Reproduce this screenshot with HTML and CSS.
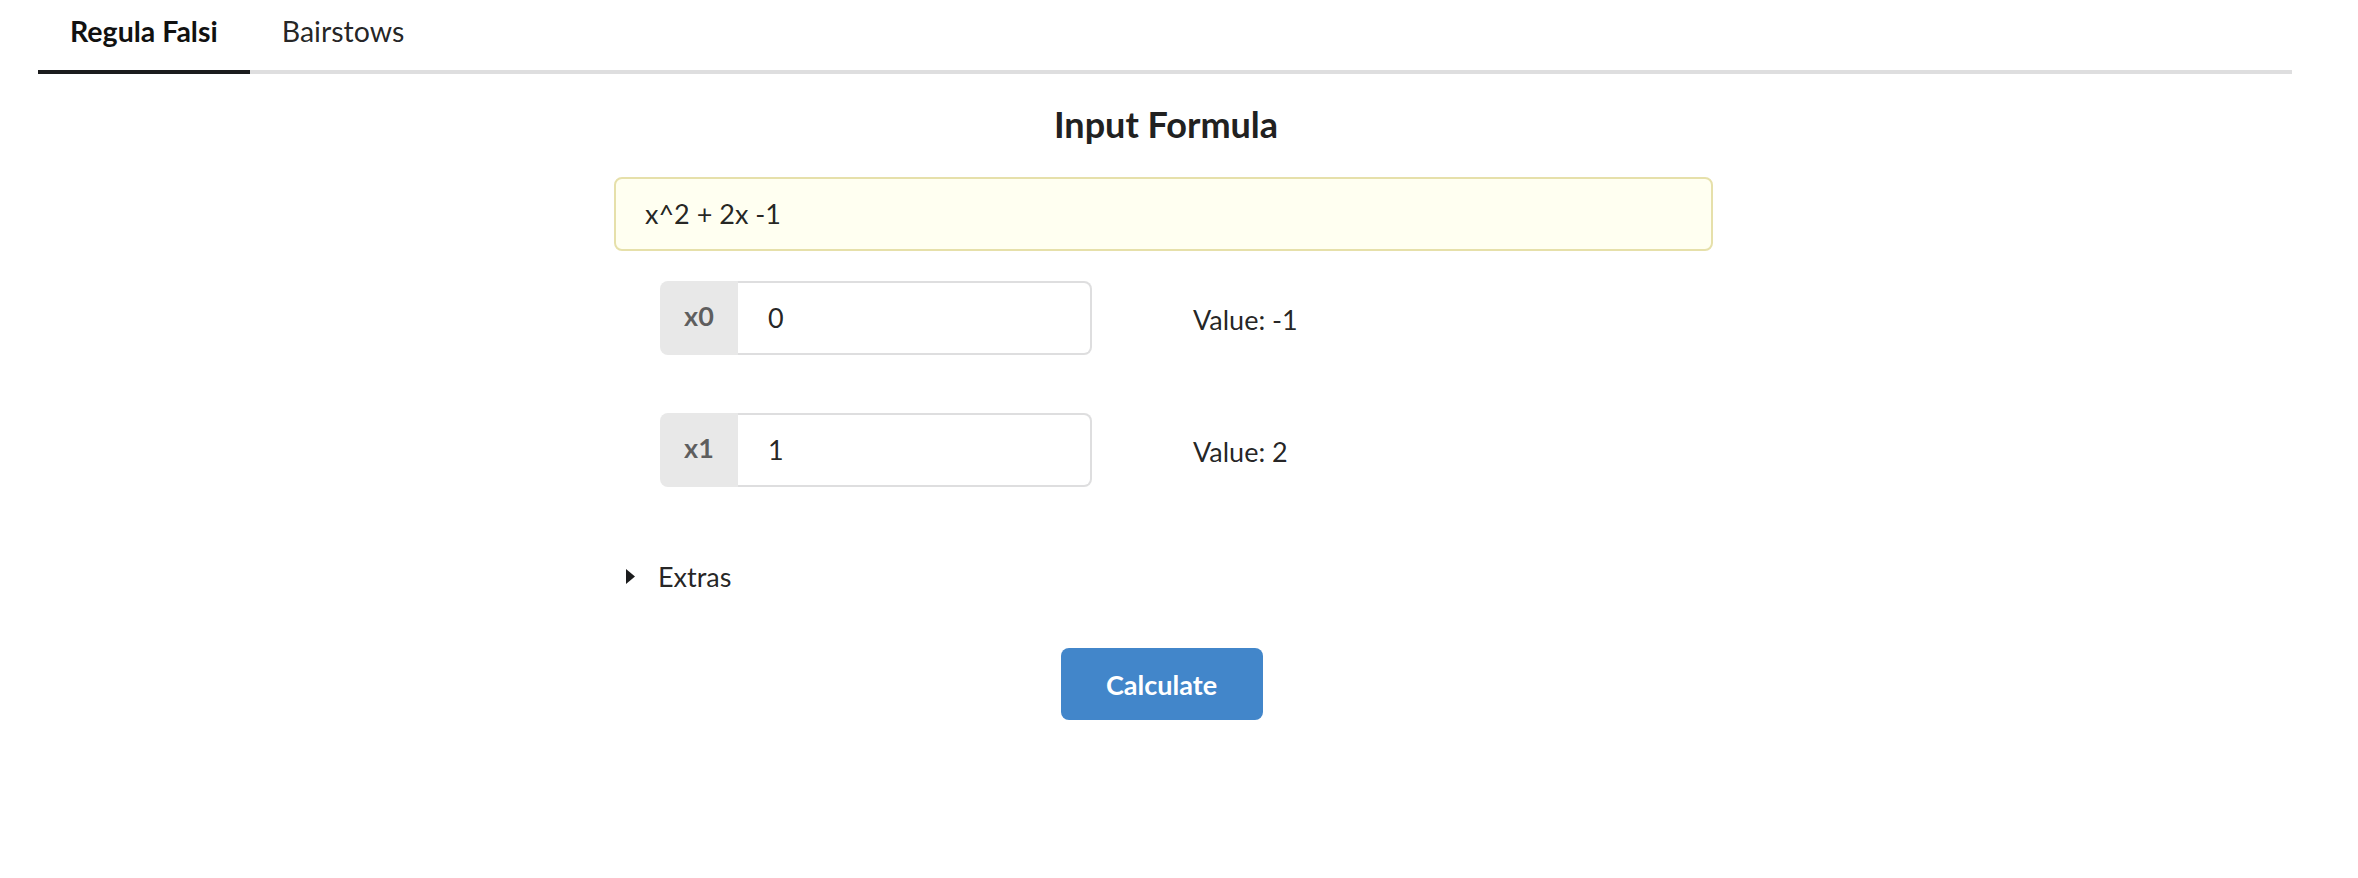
FILE: index.html
```html
<!DOCTYPE html>
<html>
<head>
<meta charset="utf-8">
<link rel="stylesheet" href="styles.css">
</head>
<body>
<div class="page">
  <nav class="tabs">
    <div class="tab active">Regula Falsi</div>
    <div class="tab">Bairstows</div>
  </nav>
  <main class="content">
    <h3 class="title">Input Formula</h3>
    <div class="form">
      <div class="formula">x^2 + 2x -1</div>
      <div class="row">
        <div class="group">
          <div class="label">x0</div>
          <div class="input">0</div>
        </div>
        <div class="value">Value: -1</div>
      </div>
      <div class="row second">
        <div class="group">
          <div class="label">x1</div>
          <div class="input">1</div>
        </div>
        <div class="value">Value: 2</div>
      </div>
      <div class="extras">
        <svg class="caret" width="9" height="15" viewBox="0 0 9 15"><path d="M0 0 L9 7.5 L0 15 Z" fill="#1b1c1d"/></svg>
        <span>Extras</span>
      </div>
      <div class="actions">
        <button class="btn">Calculate</button>
      </div>
    </div>
  </main>
</div>
</body>
</html>
```

FILE: styles.css
```css
html, body {
  margin: 0;
  padding: 0;
  background: #ffffff;
}
body {
  font-family: "Lato", "Liberation Sans", sans-serif;
  color: rgba(0, 0, 0, 0.87);
  font-size: 27px;
}
.page {
  margin: 0 66px 0 38px;
}
.tabs {
  display: flex;
  border-bottom: 4px solid #dededf;
}
.tab {
  padding: 16px 32px 24px;
  line-height: 30px;
  font-size: 28.5px;
  color: rgba(0, 0, 0, 0.87);
}
.tab.active {
  font-weight: 700;
  color: #111;
  border-bottom: 4px solid #1b1c1d;
  margin-bottom: -4px;
}
.content {
  display: flex;
  flex-direction: column;
  align-items: center;
}
.title {
  margin: 30px 0 0;
  font-size: 36px;
  line-height: 40px;
  font-weight: 700;
  color: #212121;
  transform: translateX(1px);
}
.form {
  align-self: flex-start;
  width: 1099px;
  margin-top: 33px;
  margin-left: 576px;
  display: flex;
  flex-direction: column;
}
.formula {
  box-sizing: border-box;
  height: 74px;
  border: 2px solid #e6e0aa;
  background: #fffff1;
  border-radius: 8px;
  padding-left: 29px;
  line-height: 70px;
  font-size: 27px;
}
.row {
  display: flex;
  align-items: center;
  margin-top: 30px;
  margin-left: 46px;
  gap: 101px;
}
.row.second {
  margin-top: 58px;
}
.group {
  display: flex;
  height: 74px;
  width: 432px;
}
.label {
  width: 78px;
  background: #e8e8e8;
  border-radius: 8px 0 0 8px;
  color: rgba(0, 0, 0, 0.6);
  font-weight: 700;
  font-size: 27px;
  display: flex;
  align-items: center;
  justify-content: center;
  padding-bottom: 6px;
  box-sizing: border-box;
}
.input {
  flex: 1;
  box-sizing: border-box;
  border: 2px solid #dededf;
  border-left: none;
  border-radius: 0 8px 8px 0;
  background: #fff;
  padding-left: 30px;
  line-height: 70px;
  font-size: 27px;
  color: rgba(0, 0, 0, 0.87);
}
.value {
  font-size: 27px;
  padding-top: 2px;
}
.extras {
  display: flex;
  align-items: center;
  margin-top: 72px;
  margin-left: 12px;
  gap: 23px;
  font-size: 27px;
  height: 34px;
}
.caret {
  display: block;
}
.actions {
  display: flex;
  justify-content: center;
  margin-top: 55px;
}
.btn {
  width: 202px;
  height: 72px;
  border: none;
  border-radius: 8px;
  background: #4286ca;
  color: #fff;
  font-family: "Lato", "Liberation Sans", sans-serif;
  font-weight: 700;
  font-size: 27px;
  padding: 0;
  transform: translateX(-2px);
}
```
